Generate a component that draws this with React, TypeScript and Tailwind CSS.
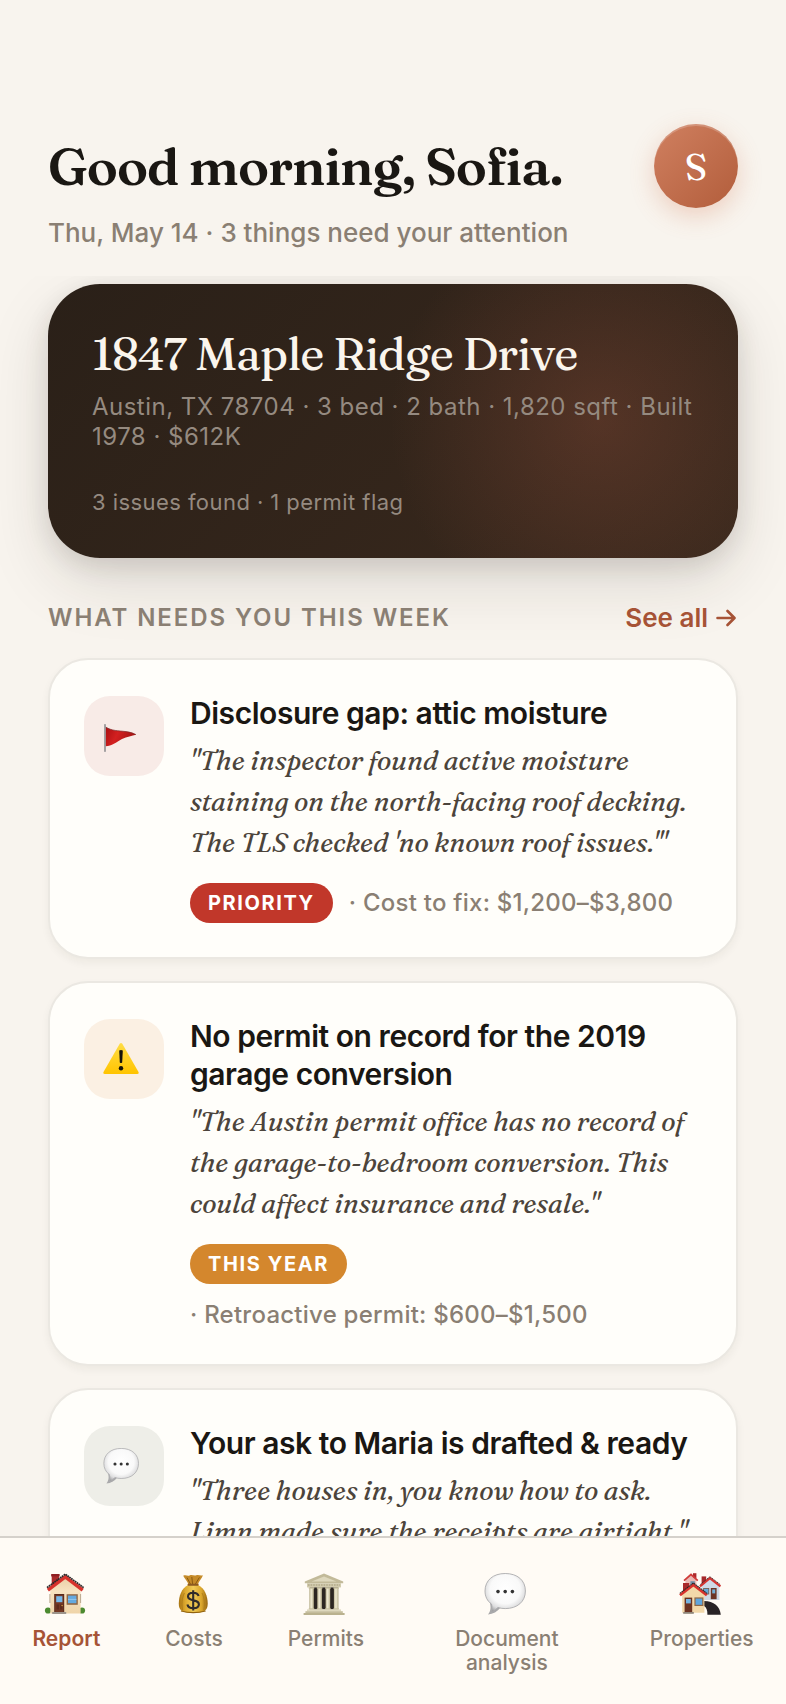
import { useId, type ReactNode } from "react";

function FlagIcon() {
  return (
    <svg viewBox="0 0 36 36" className="size-9" aria-hidden="true">
      <defs>
        <linearGradient id="flag-cloth" x1="0" y1="0" x2="1" y2="0.3">
          <stop offset="0" stopColor="#a90f12" />
          <stop offset="0.45" stopColor="#d32020" />
          <stop offset="1" stopColor="#a31414" />
        </linearGradient>
      </defs>
      <path d="M2.6 9C9 13 15 12.6 23 13.6C28 14.3 31 15.4 33 16.7C29 18 24 18.4 19 21C13 24.2 9 28 2.6 28.3Z" fill="url(#flag-cloth)" />
      <path d="M2.6 9C9 13 15 12.6 23 13.6C28 14.3 31 15.4 33 16.7" fill="none" stroke="#7d2b2b" strokeWidth="0.7" />
      <rect x="1.2" y="6" width="1.6" height="28" rx="0.7" fill="#8f8f92" />
    </svg>
  );
}

function WarningIcon() {
  return (
    <svg viewBox="0 0 36 36" className="size-9" aria-hidden="true">
      <defs>
        <linearGradient id="warn-fill" x1="0" y1="0" x2="0" y2="1">
          <stop offset="0" stopColor="#ffdd45" />
          <stop offset="1" stopColor="#ffc400" />
        </linearGradient>
      </defs>
      <path d="M16.7 2.8Q18 1 19.3 2.8L35.5 31Q36.2 33 34.2 33H1.8Q-0.2 33 0.5 31Z" fill="url(#warn-fill)" />
      <path d="M16.2 9.4Q18 8.4 19.8 9.4L19.2 21.6Q18 22.6 16.8 21.6Z" fill="#15130a" />
      <circle cx="18" cy="27.3" r="2.2" fill="#15130a" />
    </svg>
  );
}

function BubbleIcon({ large = false }: { large?: boolean }) {
  const id = useId();
  return (
    <svg viewBox="0 0 42 42" className={large ? "size-[42px]" : "size-9"} aria-hidden="true">
      <defs>
        <radialGradient id={id} cx="0.5" cy="0.4" r="0.62">
          <stop offset="0" stopColor="#ffffff" />
          <stop offset="0.6" stopColor="#f9f9f9" />
          <stop offset="0.82" stopColor="#dededf" />
          <stop offset="1" stopColor="#a2a2a4" />
        </radialGradient>
      </defs>
      <path d="M5.6 29C7.4 34 6.6 38.6 4 41.4C9 41 13.4 38.6 16.6 34.4Z" fill="#a8a8aa" />
      <path d="M21.2 0.5C33.5 0.5 41.4 7.4 41.4 18C41.4 28.5 33.5 35.6 21.2 35.6C18.5 35.6 16 35.2 13.8 34.4C11.6 37 9 39 6.5 39.8C8 37.4 8.4 34.4 7.5 31C3.2 28 1 23.4 1 18C1 7.4 9 0.5 21.2 0.5Z" fill={`url(#${id})`} stroke="#acacae" strokeWidth="0.9" />
      <circle cx="14" cy="18.6" r="1.8" fill="#333" />
      <circle cx="21.2" cy="18.6" r="1.8" fill="#333" />
      <circle cx="28.4" cy="18.6" r="1.8" fill="#333" />
    </svg>
  );
}

function HouseIcon() {
  return (
    <svg viewBox="0 0 42 42" className="size-[42px]" aria-hidden="true">
      <defs>
        <linearGradient id="house-wall" x1="0" y1="0" x2="0" y2="1">
          <stop offset="0" stopColor="#e9cda4" />
          <stop offset="0.4" stopColor="#f7e3c1" />
          <stop offset="1" stopColor="#efd4a9" />
        </linearGradient>
      </defs>
      <rect x="7.7" y="1.8" width="7.4" height="12" fill="#a92b2b" />
      <rect x="7.2" y="1" width="8.4" height="2.4" fill="#8e1f22" />
      <circle cx="4" cy="37.5" r="3.1" fill="#4c8a30" />
      <circle cx="38" cy="37.5" r="3.1" fill="#4c8a30" />
      <path d="M6.3 15L21.3 3.4L36.6 15V40.6H6.3Z" fill="url(#house-wall)" />
      <path d="M5.9 21v9M36.6 21v9" stroke="#b9a78e" strokeWidth="1" />
      <path d="M3.9 17.2L21.3 3.9L38.7 17.2" fill="none" stroke="#d8322c" strokeWidth="3.4" />
      <path d="M3 14.6L21.3 1.2L39.6 14.6" fill="none" stroke="#2d2728" strokeWidth="1.7" strokeDasharray="1.8 0.5" />
      <rect x="10.2" y="21" width="10" height="18.2" fill="#5a2b1c" />
      <rect x="11.2" y="22" width="8" height="17" fill="#743824" />
      <rect x="12.2" y="23.2" width="6.2" height="6" fill="#77b9ea" />
      <path d="M12.5 31.5h2.5v5h-2.5zM16 31.5h2.3v5H16z" fill="#5f2b1b" />
      <circle cx="18.1" cy="32.6" r="0.7" fill="#e9b64c" />
      <rect x="22.6" y="21.2" width="11.2" height="10.6" fill="#8f6846" />
      <rect x="24" y="22.6" width="8.4" height="7.6" fill="#64a9df" />
      <path d="M24 26.4H32.4" stroke="#92c8ed" strokeWidth="1" />
      <rect x="8.2" y="39" width="14" height="2" fill="#9d948b" />
    </svg>
  );
}

function MoneyBagIcon() {
  return (
    <svg viewBox="0 0 42 42" className="size-[42px]" aria-hidden="true">
      <defs>
        <linearGradient id="bag-body" x1="0" y1="0" x2="1" y2="0">
          <stop offset="0" stopColor="#a87412" />
          <stop offset="0.22" stopColor="#dda92e" />
          <stop offset="0.5" stopColor="#f1cc58" />
          <stop offset="0.78" stopColor="#dba62c" />
          <stop offset="1" stopColor="#986610" />
        </linearGradient>
      </defs>
      <path d="M11.2 2.8C14 1.6 15.4 3.4 17.6 2.4C20 1.4 22 3 24.3 2.2C26.5 1.4 28.5 3 31 2.2C29.4 6 26.6 8.6 25.8 12H16.4C16 8.6 12.6 6 11.2 2.8Z" fill="#c58a28" />
      <path d="M15 4.6L18.4 11M19.8 4L20.6 11M27.4 4.4L23.4 11" stroke="#82540f" strokeWidth="0.9" />
      <path d="M16 12C9.6 15.2 6.8 23 6.8 30.5C6.8 37.5 10 40 21.2 40S35.7 37.5 35.7 30.5C35.7 23 32.6 15.2 26.2 12Z" fill="url(#bag-body)" />
      <path d="M12.4 20C9.8 25 9.6 32 10.6 37M30 20C32.6 25 32.8 32 31.8 37" fill="none" stroke="#aa7818" strokeWidth="0.8" />
      <path d="M9 38Q21 41.4 33.6 38" fill="none" stroke="#91610f" strokeWidth="1.2" />
      <rect x="15.5" y="10.8" width="11.2" height="2" rx="1" fill="#8d5a20" />
      <path d="M26.6 23C26 20.8 24 19.7 21.2 19.7C18 19.7 16 21.2 16 23.6C16 29 26.9 25.8 26.9 31.2C26.9 33.7 24.7 35.2 21.4 35.2C18.2 35.2 16 33.9 15.4 31.4M21.2 17.2V37.6" fill="none" stroke="#302b2a" strokeWidth="2.1" />
    </svg>
  );
}

function BankIcon() {
  return (
    <svg viewBox="0 0 42 42" className="size-[42px]" aria-hidden="true">
      <defs>
        <linearGradient id="bank-column" x1="0" y1="0" x2="1" y2="0">
          <stop offset="0" stopColor="#bdb594" />
          <stop offset="0.45" stopColor="#f0ebd4" />
          <stop offset="1" stopColor="#b8b08e" />
        </linearGradient>
      </defs>
      <path d="M21 0.6L40.2 8.4V10.2H1.8V8.4Z" fill="#c2ba99" />
      <path d="M21 3.4L33.4 8.5H8.6Z" fill="#ded8bd" />
      <rect x="4" y="10.2" width="34" height="4.2" fill="#d2cbad" />
      <path d="M5 12H37" stroke="#a49c7c" strokeWidth="1.2" strokeDasharray="1.6 1" />
      <rect x="7" y="14.4" width="28" height="22" fill="#2c2622" />
      {[6.2, 14.3, 22.6, 30.9].map((x) => (
        <g key={x}>
          <rect x={x} y="15" width="4.6" height="21.4" fill="url(#bank-column)" />
          <rect x={x - 0.5} y="14.2" width="5.6" height="1.5" fill="#c8c09f" />
          <rect x={x - 0.5} y="35.3" width="5.6" height="1.4" fill="#c8c09f" />
        </g>
      ))}
      <rect x="4" y="36.4" width="34" height="2" fill="#ded8bd" />
      <rect x="2.4" y="38.2" width="37.4" height="1.9" fill="#c5bd9d" />
      <rect x="0.6" y="40" width="41" height="2" fill="#bab28f" />
    </svg>
  );
}

function HousesIcon() {
  return (
    <svg viewBox="0 0 42 42" className="size-[42px]" aria-hidden="true">
      <rect x="14" y="0.2" width="3.4" height="5" fill="#ac2a2c" />
      <path d="M6.4 7L12 2L17.4 7V14H6.4Z" fill="#e9b9b4" />
      <rect x="11.4" y="8.2" width="4.4" height="3.6" fill="#6f8fa8" />
      <path d="M5 7.6L12 1.5L18.8 7.6" fill="none" stroke="#cf3b39" strokeWidth="1.7" />
      <rect x="22.6" y="3.4" width="4.6" height="7" fill="#a6282a" />
      <path d="M22.6 12L30.8 5L40.4 12V27H22.6Z" fill="#cfd9e6" />
      <rect x="24.2" y="15" width="6" height="6.4" fill="#7c5b4a" />
      <rect x="25" y="15.8" width="4.4" height="4.8" fill="#64a9da" />
      <rect x="31.8" y="15" width="5.8" height="11.2" fill="#6b3425" />
      <rect x="33.2" y="16.4" width="3" height="4" fill="#72afd8" />
      <path d="M21 13.4L30.9 5.2L41.4 13.4" fill="none" stroke="#d63330" strokeWidth="2.2" />
      <path d="M21.4 11.4L30.9 3.7L41.4 11.6" fill="none" stroke="#3a2729" strokeWidth="0.9" strokeDasharray="1.5 0.6" />
      <path d="M25 28C35 28 41 33.4 41.8 41.8H28.4C28.6 37.2 27.4 34.4 25 33Z" fill="#292326" />
      <rect x="4" y="10" width="6.2" height="9" fill="#aa292b" />
      <path d="M3.2 21L14.4 11.6L25.4 21V39.8H3.2Z" fill="#f2d8aa" />
      <path d="M1 22.2L14.4 11.9L27.8 22.2" fill="none" stroke="#d8322d" strokeWidth="2.6" />
      <path d="M0.8 20.4L14.4 10L28 20.4" fill="none" stroke="#2e2526" strokeWidth="1.1" strokeDasharray="1.7 0.5" />
      <rect x="5.6" y="24.6" width="7.6" height="14.8" fill="#6b3120" />
      <rect x="7" y="26" width="4.8" height="4.4" fill="#76b3e0" />
      <rect x="15.4" y="24.4" width="9" height="8.6" fill="#8e6848" />
      <rect x="16.6" y="25.6" width="6.6" height="6.2" fill="#5fa5dd" />
      <rect x="4.2" y="39" width="10.6" height="1.8" fill="#8f8579" />
    </svg>
  );
}

interface TaskCardProps {
  icon: ReactNode;
  tile: string;
  title: string;
  quote: string;
  tag?: string;
  tagColor?: string;
  meta?: string;
}

function TaskCard({ icon, tile, title, quote, tag, tagColor, meta }: TaskCardProps) {
  return (
    <article className="flex gap-[26px] rounded-[40px] border-2 border-[#ebe8e2] bg-[#fffefa] p-[34px] shadow-[0_4px_8px_rgba(42,33,24,0.05)]">
      <div className={`mt-0.5 flex size-20 shrink-0 items-center justify-center rounded-[26px] pr-1.5 ${tile}`}>{icon}</div>
      <div className="min-w-0 flex-1">
        <h3 className="text-[30px] leading-[38px] font-semibold tracking-[-0.015em] text-[#1a1713]">{title}</h3>
        <p className="mt-2 font-['Fraunces','Liberation_Serif',serif] text-[27px] leading-[41px] text-[#4c443b] italic">{quote}</p>
        {tag && (
          <div className="mt-5 flex flex-wrap items-center gap-4">
            <span className={`rounded-[20px] px-[18px] text-[20px] leading-10 font-bold tracking-[0.08em] text-white uppercase ${tagColor}`}>
              {tag}
            </span>
            <span className="text-[24px] leading-[30px] font-medium tracking-[0.01em] text-[#8a7f73]">{meta}</span>
          </div>
        )}
      </div>
    </article>
  );
}

const tabs = [
  { label: "Report", icon: <HouseIcon />, active: true, width: "" },
  { label: "Costs", icon: <MoneyBagIcon />, active: false, width: "" },
  { label: "Permits", icon: <BankIcon />, active: false, width: "" },
  { label: "Document analysis", icon: <BubbleIcon large />, active: false, width: "w-[156px]" },
  { label: "Properties", icon: <HousesIcon />, active: false, width: "" },
];

export default function App() {
  return (
    <div className="flex h-screen flex-col bg-[#f8f4ee] font-['Inter',sans-serif] text-[#1a1713]">
      <header className="flex shrink-0 items-start justify-between px-12 pt-[124px] pb-7">
        <div>
          <h1 className="mt-2 font-['Fraunces','Liberation_Serif',serif] text-[52px] leading-[68px] font-semibold tracking-[-0.02em]">
            Good morning, Sofia.
          </h1>
          <p className="mt-[18px] text-[26px] leading-[30px] font-medium text-[#8a7f73]">Thu, May 14 · 3 things need your attention</p>
        </div>
        <button
          type="button"
          aria-label="Sofia's account"
          className="flex size-[84px] items-center justify-center rounded-full bg-linear-135 from-[#d08060] to-[#b25d3b] font-['Fraunces','Liberation_Serif',serif] text-[38px] text-white shadow-[0_8px_24px_rgba(208,112,72,0.28),inset_0_2px_0_rgba(255,255,255,0.2)]"
        >
          S
        </button>
      </header>

      <main className="min-h-0 flex-1 overflow-y-auto px-12 pt-2 [scrollbar-width:none]">
        <section className="rounded-[52px] bg-[radial-gradient(circle_at_80%_50%,rgba(150,80,60,0.32),transparent_210px),linear-gradient(135deg,#2a2018,#3a291d)] px-11 pt-11 pb-[42px] shadow-[0_24px_64px_rgba(42,33,24,0.13),0_8px_24px_rgba(42,33,24,0.12)]">
          <h2 className="font-['Fraunces','Liberation_Serif',serif] text-[46px] leading-[52px] tracking-[-0.02em] text-[#faf5ed]">
            1847 Maple Ridge Drive
          </h2>
          <p className="mt-3 text-[24px] leading-[30px] tracking-[0.02em] text-[#958a80]">
            Austin, TX 78704 · 3 bed · 2 bath · 1,820 sqft · Built 1978 · $612K
          </p>
          <p className="mt-9 text-[22px] leading-7 tracking-[0.02em] text-[#958a80]">3 issues found · 1 permit flag</p>
        </section>

        <div className="flex items-center justify-between pt-11 pb-6">
          <h2 className="text-[24px] leading-8 font-semibold tracking-[0.08em] text-[#8a7f73] uppercase">What needs you this week</h2>
          <a href="#all" className="flex items-center gap-2 pr-0.5 text-[26px] leading-8 font-semibold text-[#a65336]">
            See all
            <svg viewBox="0 0 20 20" className="size-5" fill="none" stroke="currentColor" strokeWidth="2.6" strokeLinecap="round" strokeLinejoin="round" aria-hidden="true">
              <path d="M1.5 10H18M11.5 3L18.5 10L11.5 17" />
            </svg>
          </a>
        </div>

        <div className="flex flex-col gap-[22px] pb-6">
          <TaskCard
            icon={<FlagIcon />}
            tile="bg-[#f8ebe7]"
            title="Disclosure gap: attic moisture"
            quote={`"The inspector found active moisture staining on the north-facing roof decking. The TLS checked 'no known roof issues.'"`}
            tag="Priority"
            tagColor="bg-[#c1372a]"
            meta="· Cost to fix: $1,200–$3,800"
          />
          <TaskCard
            icon={<WarningIcon />}
            tile="bg-[#fbf0e3]"
            title="No permit on record for the 2019 garage conversion"
            quote={`"The Austin permit office has no record of the garage-to-bedroom conversion. This could affect insurance and resale."`}
            tag="This year"
            tagColor="bg-[#d4872d]"
            meta="· Retroactive permit: $600–$1,500"
          />
          <TaskCard
            icon={<BubbleIcon />}
            tile="bg-[#eeeee8]"
            title="Your ask to Maria is drafted & ready"
            quote={`"Three houses in, you know how to ask. Limn made sure the receipts are airtight."`}
          />
        </div>
      </main>

      <nav aria-label="Main" className="flex h-[168px] shrink-0 items-start justify-around border-t-2 border-[#d5d1cb] bg-[#fffbf5] pt-[35px]">
        {tabs.map((tab) => (
          <a
            key={tab.label}
            href="#tab"
            aria-current={tab.active ? "page" : undefined}
            className={`flex flex-col items-center gap-3 text-center text-[21px] leading-6 ${tab.width} ${tab.active ? "font-semibold text-[#a65336]" : "font-medium text-[#8a7f73]"}`}
          >
            <span className="pr-[3px]">{tab.icon}</span>
            <span className={tab.width ? "px-4" : ""}>{tab.label}</span>
          </a>
        ))}
      </nav>
    </div>
  );
}
